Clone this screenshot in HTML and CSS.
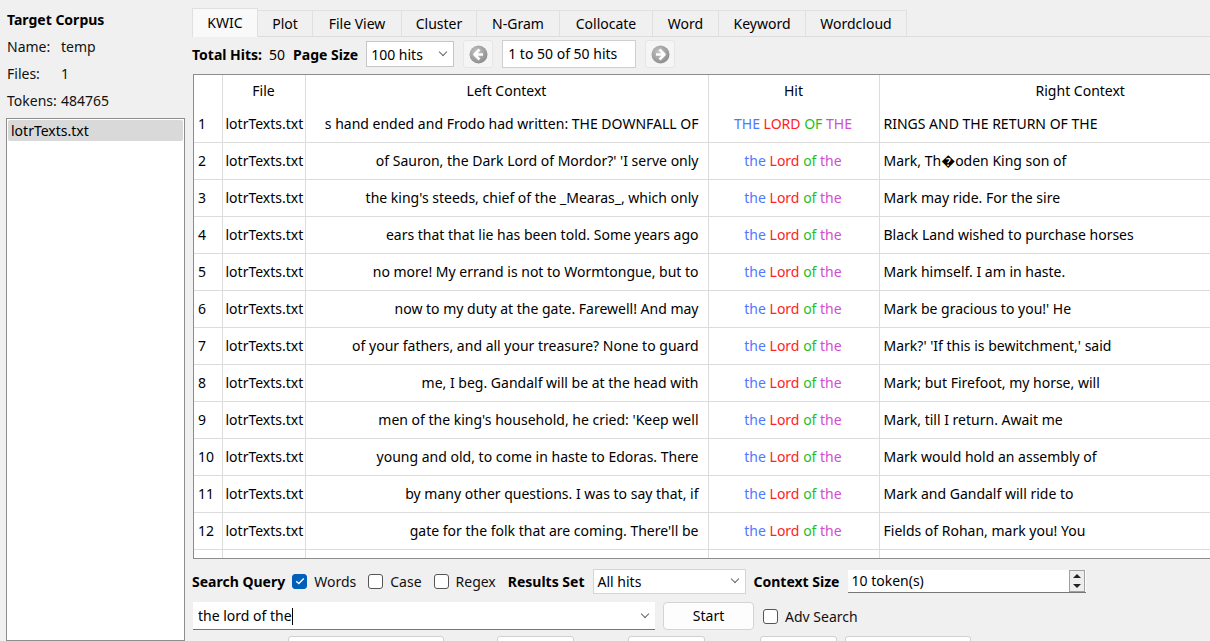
FILE: index.html
```html
<!DOCTYPE html>
<html>
<head>
<meta charset="utf-8">
<link rel="stylesheet" href="styles.css">
</head>
<body>
<div class="app">
  <aside class="side">
    <div class="side-title">Target Corpus</div>
    <div class="side-row"><span class="lbl">Name:</span><span>temp</span></div>
    <div class="side-row"><span class="lbl">Files:</span><span>1</span></div>
    <div class="side-row"><span class="lbl">Tokens:</span><span>484765</span></div>
    <div class="filelist">
      <div class="file sel">lotrTexts.txt</div>
    </div>
  </aside>
  <main class="main">
    <nav class="tabs">
      <div class="tab active">KWIC</div>
      <div class="tab">Plot</div>
      <div class="tab">File View</div>
      <div class="tab">Cluster</div>
      <div class="tab">N-Gram</div>
      <div class="tab">Collocate</div>
      <div class="tab">Word</div>
      <div class="tab">Keyword</div>
      <div class="tab">Wordcloud</div>
    </nav>
    <div class="toolbar">
      <b class="bold">Total Hits:</b><span class="hits">50</span>
      <b class="bold">Page Size</b>
      <div class="combo pagesize"><span>100 hits</span><span class="chev"></span></div>
      <div class="navbtn"><svg width="19" height="19" viewBox="0 0 19 19"><defs><radialGradient id="g1" cx="0.4" cy="0.35" r="0.7"><stop offset="0" stop-color="#c4c4c4"/><stop offset="1" stop-color="#8a8a8a"/></radialGradient></defs><circle cx="9.5" cy="9.5" r="9" fill="url(#g1)"/><path d="M10.5 4.5 L5.5 9.5 L10.5 14.5 M5.8 9.5 H14" stroke="#fff" stroke-width="2.6" fill="none" stroke-linejoin="round"/></svg></div>
      <div class="pagefield">1 to 50 of 50 hits</div>
      <div class="navbtn"><svg width="19" height="19" viewBox="0 0 19 19"><defs><radialGradient id="g2" cx="0.4" cy="0.35" r="0.7"><stop offset="0" stop-color="#c4c4c4"/><stop offset="1" stop-color="#8a8a8a"/></radialGradient></defs><circle cx="9.5" cy="9.5" r="9" fill="url(#g2)"/><path d="M8.5 4.5 L13.5 9.5 L8.5 14.5 M13.2 9.5 H5" stroke="#fff" stroke-width="2.6" fill="none" stroke-linejoin="round"/></svg></div>
    </div>
    <div class="tablewrap">
      <table class="kwic">
        <colgroup><col class="c-num"><col class="c-file"><col class="c-left"><col class="c-hit"><col class="c-right"></colgroup>
        <thead><tr><th></th><th>File</th><th>Left Context</th><th>Hit</th><th>Right Context</th></tr></thead>
        <tbody>
          <tr><td class="num">1</td><td>lotrTexts.txt</td><td class="left">s hand ended and Frodo had written: THE DOWNFALL OF</td><td class="hit"><span class="h1">THE</span> <span class="h2">LORD</span> <span class="h3">OF</span> <span class="h4">THE</span></td><td>RINGS AND THE RETURN OF THE</td></tr>
          <tr><td class="num">2</td><td>lotrTexts.txt</td><td class="left">of Sauron, the Dark Lord of Mordor?' 'I serve only</td><td class="hit"><span class="h1">the</span> <span class="h2">Lord</span> <span class="h3">of</span> <span class="h4">the</span></td><td>Mark, Th&#xFFFD;oden King son of</td></tr>
          <tr><td class="num">3</td><td>lotrTexts.txt</td><td class="left">the king's steeds, chief of the _Mearas_, which only</td><td class="hit"><span class="h1">the</span> <span class="h2">Lord</span> <span class="h3">of</span> <span class="h4">the</span></td><td>Mark may ride. For the sire</td></tr>
          <tr><td class="num">4</td><td>lotrTexts.txt</td><td class="left">ears that that lie has been told. Some years ago</td><td class="hit"><span class="h1">the</span> <span class="h2">Lord</span> <span class="h3">of</span> <span class="h4">the</span></td><td>Black Land wished to purchase horses</td></tr>
          <tr><td class="num">5</td><td>lotrTexts.txt</td><td class="left">no more! My errand is not to Wormtongue, but to</td><td class="hit"><span class="h1">the</span> <span class="h2">Lord</span> <span class="h3">of</span> <span class="h4">the</span></td><td>Mark himself. I am in haste.</td></tr>
          <tr><td class="num">6</td><td>lotrTexts.txt</td><td class="left">now to my duty at the gate. Farewell! And may</td><td class="hit"><span class="h1">the</span> <span class="h2">Lord</span> <span class="h3">of</span> <span class="h4">the</span></td><td>Mark be gracious to you!' He</td></tr>
          <tr><td class="num">7</td><td>lotrTexts.txt</td><td class="left">of your fathers, and all your treasure? None to guard</td><td class="hit"><span class="h1">the</span> <span class="h2">Lord</span> <span class="h3">of</span> <span class="h4">the</span></td><td>Mark?' 'If this is bewitchment,' said</td></tr>
          <tr><td class="num">8</td><td>lotrTexts.txt</td><td class="left">me, I beg. Gandalf will be at the head with</td><td class="hit"><span class="h1">the</span> <span class="h2">Lord</span> <span class="h3">of</span> <span class="h4">the</span></td><td>Mark; but Firefoot, my horse, will</td></tr>
          <tr><td class="num">9</td><td>lotrTexts.txt</td><td class="left">men of the king's household, he cried: 'Keep well</td><td class="hit"><span class="h1">the</span> <span class="h2">Lord</span> <span class="h3">of</span> <span class="h4">the</span></td><td>Mark, till I return. Await me</td></tr>
          <tr><td class="num">10</td><td>lotrTexts.txt</td><td class="left">young and old, to come in haste to Edoras. There</td><td class="hit"><span class="h1">the</span> <span class="h2">Lord</span> <span class="h3">of</span> <span class="h4">the</span></td><td>Mark would hold an assembly of</td></tr>
          <tr><td class="num">11</td><td>lotrTexts.txt</td><td class="left">by many other questions. I was to say that, if</td><td class="hit"><span class="h1">the</span> <span class="h2">Lord</span> <span class="h3">of</span> <span class="h4">the</span></td><td>Mark and Gandalf will ride to</td></tr>
          <tr><td class="num">12</td><td>lotrTexts.txt</td><td class="left">gate for the folk that are coming. There'll be</td><td class="hit"><span class="h1">the</span> <span class="h2">Lord</span> <span class="h3">of</span> <span class="h4">the</span></td><td>Fields of Rohan, mark you! You</td></tr>
          <tr><td class="num"></td><td></td><td class="left"></td><td class="hit"></td><td></td></tr>
        </tbody>
      </table>
    </div>
    <div class="qrow1">
      <b class="bold">Search Query</b>
      <span class="cb checked first"><svg width="10" height="8" viewBox="0 0 10 8"><path d="M1.2 4.2 L3.8 6.6 L8.8 1.4" stroke="#fff" stroke-width="1.4" fill="none"/></svg></span><span class="cbl">Words</span>
      <span class="cb"></span><span class="cbl">Case</span>
      <span class="cb"></span><span class="cbl">Regex</span>
      <b class="bold rs">Results Set</b>
      <div class="combo resset"><span>All hits</span><span class="chev"></span></div>
      <b class="bold">Context Size</b>
      <div class="spinner"><span>10 token(s)</span><span class="spin"><span class="up"></span><span class="dn"></span></span></div>
    </div>
    <div class="qrow2">
      <div class="combo query"><span>the lord of the<span class="caret"></span></span><span class="chev"></span></div>
      <div class="btn start">Start</div>
      <span class="cb first"></span><span class="cbl">Adv Search</span>
    </div>
    <div class="qrow3">
      <div class="stub s1"></div>
      <div class="stub s2"></div>
      <div class="stub s3"></div>
      <div class="stub s4"></div>
      <div class="stub s5"></div>
    </div>
  </main>
</div>
</body>
</html>
```

FILE: styles.css
```css
* { box-sizing: border-box; }
html, body {
  margin: 0;
  padding: 0;
  width: 1210px;
  height: 641px;
  overflow: hidden;
  background: #f0f0f0;
  font-family: "Noto Sans", "Open Sans", sans-serif;
  font-size: 14px;
  color: #000;
}
.app {
  display: flex;
  height: 641px;
}
.side {
  width: 192px;
  flex: none;
  padding: 9px 0 0 7px;
  display: flex;
  flex-direction: column;
}
.side-title {
  font-weight: bold;
  height: 27px;
  line-height: 22px;
}
.side-row {
  height: 27px;
  line-height: 22px;
  display: flex;
  color: #111;
}
.side-row .lbl { width: 54px; }
.filelist {
  margin: 1px 0 0 -1px;
  width: 179px;
  flex: 1;
  background: #fff;
  border: 1px solid #8e8e8e;
  padding: 1px;
}
.file {
  height: 21px;
  line-height: 21px;
  padding-left: 3px;
  border-radius: 2px;
}
.file.sel { background: #d9d9d9; }

.main {
  flex: 1;
  min-width: 0;
  display: flex;
  flex-direction: column;
}
.main > * { flex: none; }
.tabs {
  display: flex;
  height: 37px;
  padding-top: 9px;
  align-items: flex-end;
  border-bottom: 1px solid #dcdcdc;
}
.tab {
  height: 26px;
  line-height: 26px;
  border: 1px solid #e0e0e0;
  border-bottom: none;
  margin-left: -1px;
  text-align: center;
  background: #f0f0f0;
}
.tab:nth-child(1) { width: 66px; margin-left: 0; }
.tab:nth-child(2) { width: 56px; }
.tab:nth-child(3) { width: 90px; }
.tab:nth-child(4) { width: 76px; }
.tab:nth-child(5) { width: 84px; }
.tab:nth-child(6) { width: 94px; }
.tab:nth-child(7) { width: 67px; }
.tab:nth-child(8) { width: 88px; }
.tab:nth-child(9) { width: 102px; }
.tab.active {
  height: 29px;
  background: #f9f9f9;
  margin-bottom: -1px;
  line-height: 28px;
  padding-bottom: 1px;
}

.toolbar {
  display: flex;
  align-items: center;
  height: 33px;
  padding-top: 1px;
  white-space: nowrap;
}
.bold { font-weight: bold; }
.hits { margin: 0 8px 0 7px; }
.combo {
  display: flex;
  align-items: center;
  justify-content: space-between;
  background: #fff;
  border: 1px solid #c6c6c6;
  padding: 0 7px 0 4px;
}
.chev {
  width: 6px;
  height: 6px;
  border-right: 1px solid #666;
  border-bottom: 1px solid #666;
  transform: rotate(45deg);
  margin-top: -4px;
}
.pagesize {
  width: 88px;
  height: 26px;
  margin-left: 8px;
}
.navbtn {
  width: 30px;
  height: 28px;
  margin-left: 9px;
  background: #f5f5f5;
  border: 1px solid #e6e6e6;
  border-radius: 3px;
  display: flex;
  align-items: center;
  justify-content: center;
}
.pagefield {
  width: 134px;
  height: 28px;
  margin-left: 9px;
  background: #fff;
  border: 1px solid #cfcfcf;
  padding-left: 5px;
  line-height: 26px;
}

.tablewrap {
  margin-top: 4px;
  height: 485px;
  width: 1100px;
  border: 1px solid #8c8c8c;
  border-right: none;
  background: #fff;
  overflow: hidden;
  margin-left: 1px;
}
.kwic {
  border-collapse: collapse;
  table-layout: fixed;
  width: 1087px;
}
.c-num { width: 28px; }
.c-file { width: 83px; }
.c-left { width: 403px; }
.c-hit { width: 171px; }
.c-right { width: 402px; }
.kwic th {
  font-weight: normal;
  height: 30px;
  padding: 0;
  text-align: center;
  border-left: 1px solid #dcdcdc;
}
.kwic th:first-child, .kwic td:first-child { border-left: none; }
.kwic td {
  height: 37px;
  padding: 0 4px 0 3px;
  white-space: nowrap;
  overflow: hidden;
  border-left: 1px solid #dcdcdc;
  border-bottom: 1px solid #dcdcdc;
}
.kwic td.num { padding-left: 4px; }
.kwic td.left { text-align: right; padding-right: 9px; }
.kwic td.hit { text-align: center; }
.kwic td:last-child { padding-left: 4px; }
.h1 { color: #5078ff; }
.h2 { color: #ff2222; }
.h3 { color: #1fbf1f; }
.h4 { color: #cf4fd0; }

.qrow1 {
  display: flex;
  align-items: center;
  height: 26px;
  margin-top: 9px;
  white-space: nowrap;
}
.cb {
  width: 15px;
  height: 15px;
  border: 1px solid #555;
  border-radius: 3px;
  background: #fff;
  margin-left: 12px;
  display: inline-flex;
  align-items: center;
  justify-content: center;
  flex: none;
}
.cb.first { margin-left: 7px; }
.cb.checked {
  background: #005fb8;
  border-color: #005fb8;
}
.cbl { margin-left: 7px; color: #111; }
.rs { margin-left: 12px; }
.resset {
  width: 153px;
  height: 25px;
  margin-left: 8px;
  margin-right: 8px;
  border-color: #d5d5d5;
}
.spinner {
  width: 238px;
  height: 23px;
  margin-left: 9px;
  background: #fff;
  border-bottom: 1px solid #777;
  display: flex;
  justify-content: space-between;
  align-items: center;
  padding-left: 3px;
}
.spin {
  width: 16px;
  height: 22px;
  border: 1px solid #a0a0a0;
  background: #eee;
  display: flex;
  flex-direction: column;
  align-items: center;
  justify-content: space-around;
  margin-right: 1px;
}
.spin .up {
  width: 0; height: 0;
  border-left: 4px solid transparent;
  border-right: 4px solid transparent;
  border-bottom: 4px solid #222;
}
.spin .dn {
  width: 0; height: 0;
  border-left: 4px solid transparent;
  border-right: 4px solid transparent;
  border-top: 4px solid #222;
}
.qrow2 {
  display: flex;
  align-items: center;
  height: 28px;
  margin-top: 8px;
  white-space: nowrap;
}
.query {
  width: 462px;
  height: 28px;
  margin-left: 1px;
  border: none;
  border-bottom: 1px solid #777;
  padding-left: 5px;
}
.caret {
  display: inline-block;
  width: 1px;
  height: 17px;
  background: #000;
  vertical-align: -4px;
}
.btn {
  background: #fdfdfd;
  border: 1px solid #d4d4d4;
  border-radius: 4px;
  text-align: center;
}
.start {
  width: 91px;
  height: 28px;
  line-height: 26px;
  margin-left: 8px;
  margin-right: 2px;
}
.qrow3 {
  height: 20px;
  display: flex;
  margin-top: 6px;
}
.stub {
  height: 20px;
  background: #fff;
  border: 1px solid #d0d0d0;
  border-radius: 3px;
}
.s1 { width: 156px; margin-left: 96px; }
.s2 { width: 77px; margin-left: 53px; }
.s3 { width: 77px; margin-left: 54px; }
.s4 { width: 77px; margin-left: 55px; }
.s5 { width: 126px; margin-left: 8px; }
```
